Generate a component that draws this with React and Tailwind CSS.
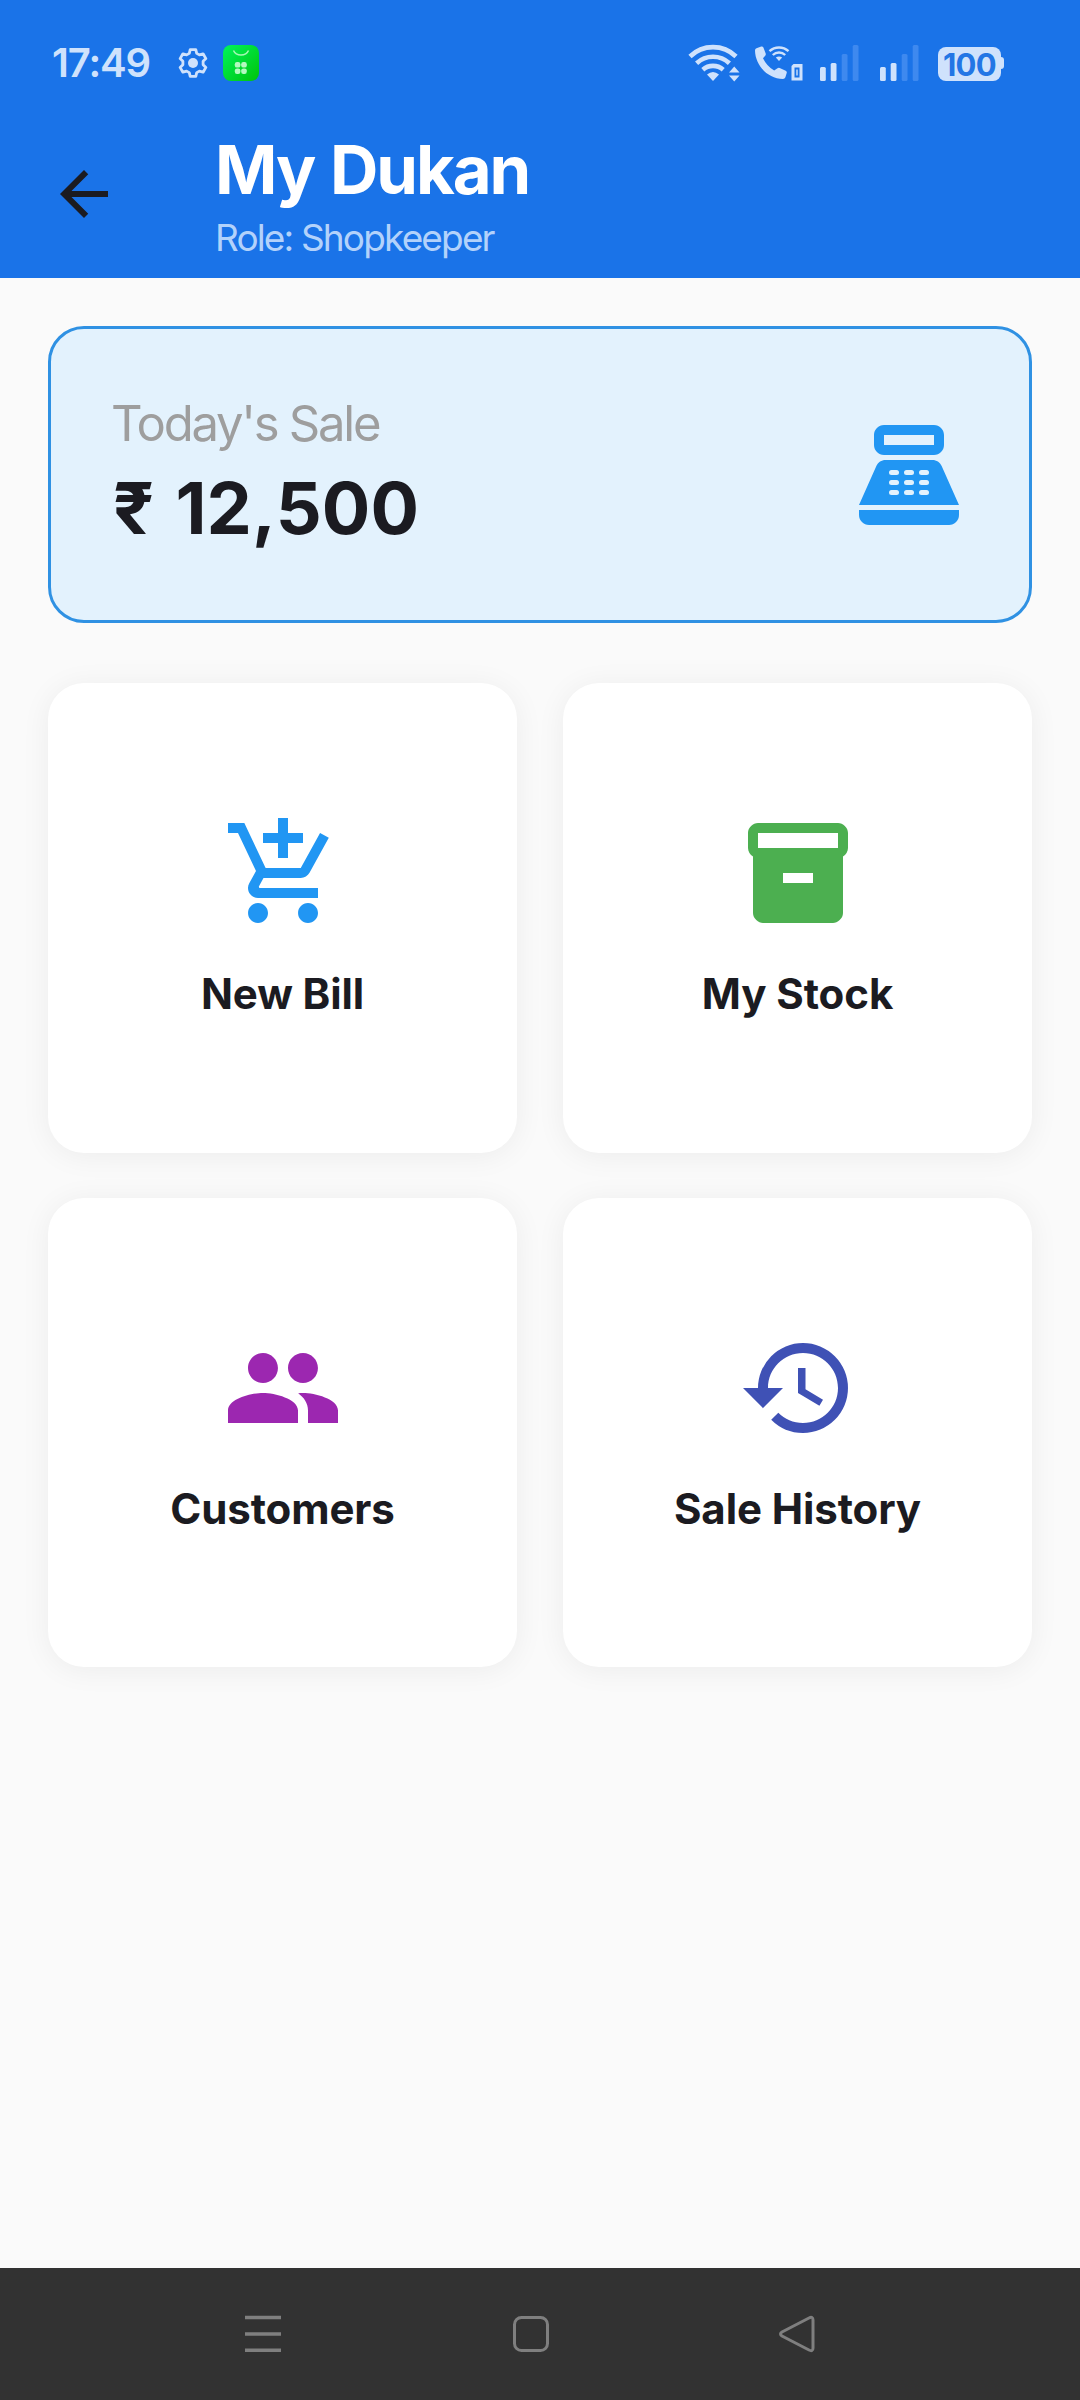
import clsx from 'clsx';
import {
  MdAddShoppingCart,
  MdArrowBack,
  MdHistory,
  MdPeople,
} from 'react-icons/md';

function SettingsIcon() {
  return (
    <svg viewBox="0 0 30 30" className="h-[30px] w-[30px]" fill="none">
      <path
        d="M12.2 1.6h5.6l.9 3.8 2.7 1.5 3.7-1.1 2.8 4.8-2.8 2.7v3.4l2.8 2.7-2.8 4.8-3.7-1.1-2.7 1.5-.9 3.8h-5.6l-.9-3.8-2.7-1.5-3.7 1.1-2.8-4.8 2.8-2.7v-3.4l-2.8-2.7 2.8-4.8 3.7 1.1 2.7-1.5z"
        stroke="currentColor"
        strokeWidth="2.8"
        strokeLinejoin="round"
      />
      <circle cx="15" cy="15" r="5" fill="currentColor" />
    </svg>
  );
}

function ShopBadge() {
  return (
    <svg viewBox="0 0 36 36" className="h-9 w-9">
      <defs>
        <linearGradient id="badge" x1="0" y1="0" x2="1" y2="1">
          <stop offset="0" stopColor="#00f45c" />
          <stop offset="1" stopColor="#00c30a" />
        </linearGradient>
      </defs>
      <rect width="36" height="36" rx="8" fill="url(#badge)" />
      <path d="M10.5 5.5a8 7 0 0 0 15 0" fill="none" stroke="#a5f7b4" strokeWidth="1.5" />
      <g fill="#b4f9bf">
        <rect x="11.8" y="17" width="5.6" height="5.6" rx="2.2" />
        <rect x="18.2" y="17" width="5.6" height="5.6" rx="2.2" />
        <rect x="11.8" y="23.4" width="5.6" height="5.6" rx="2.2" />
        <rect x="18.2" y="23.4" width="5.6" height="5.6" rx="2.2" />
      </g>
    </svg>
  );
}

function WifiIcon() {
  return (
    <svg viewBox="0 0 52 38" className="h-[38px] w-[52px]" fill="none">
      <g stroke="currentColor" strokeWidth="4.6">
        <path d="M2 12.5a33 33 0 0 1 46 0" />
        <path d="M8.6 19.2a24 24 0 0 1 32.8 0" />
        <path d="M14.8 25.7a15.5 15.5 0 0 1 20.4 0" />
      </g>
      <path d="M19 30.5q6-5 12 0l-6 6.5z" fill="currentColor" />
      <path d="M41 28.5h10.5l-5.25-6zM41 31.5h10.5l-5.25 6z" fill="currentColor" />
    </svg>
  );
}

function WifiCallIcon() {
  return (
    <svg viewBox="0 0 49 38" className="h-[38px] w-[49px]" fill="none">
      <path
        d="M2.5 4.3L7.2 2.6q1.6-.4 2.3 1.2l2.2 5.6q.4 1.3-.5 2.3l-2.2 2.6q4 8.3 11.2 12.2l3.3-2.3q1-.7 2.2-.2l6 2.7q1.5.8 1 2.3l-1.3 4.2q-.7 1.7-2.4 1.7C13.5 34.7 1.2 21 1 6.5q0-1.6 1.5-2.2z"
        fill="currentColor"
      />
      <g stroke="currentColor" strokeWidth="2.4">
        <path d="M15.5 7.2a14 14 0 0 1 19 0" />
        <path d="M18.8 11a9 9 0 0 1 12.4 0" />
      </g>
      <path d="M21.8 13.5q3.2-2.2 6.4 0L25 17z" fill="currentColor" />
      <path
        d="M39.5 20H48.5v16.500H37.5V22zM40.5 23.5v10h5v-10zM42.3 25.5h1.4v6h-1.4z"
        fill="currentColor"
        fillRule="evenodd"
      />
    </svg>
  );
}

const bars = [
  { x: 0, y: 22, on: true },
  { x: 10.7, y: 18, on: true },
  { x: 21.7, y: 9, on: false },
  { x: 32.7, y: 0, on: false },
];

function SignalIcon() {
  return (
    <svg viewBox="0 0 39 36" className="h-9 w-[39px]">
      {bars.map((bar) => (
        <rect
          key={bar.x}
          x={bar.x}
          y={bar.y}
          width="5.8"
          height={36 - bar.y}
          rx="1.5"
          fill={bar.on ? '#cfe2fc' : '#3e89ef'}
        />
      ))}
    </svg>
  );
}

function StatusBar() {
  return (
    <div className="flex h-[126px] items-center pl-[52px] pr-[76px] text-[#cfe2fc]">
      <span className="w-[126px] text-[40px] leading-none font-semibold tracking-[-1.1px]">17:49</span>
      <SettingsIcon />
      <div className="ml-[15px]">
        <ShopBadge />
      </div>
      <div className="ml-auto flex items-center">
        <WifiIcon />
        <div className="ml-[14px]">
          <WifiCallIcon />
        </div>
        <div className="ml-[17px]">
          <SignalIcon />
        </div>
        <div className="ml-[21px]">
          <SignalIcon />
        </div>
        <div className="mt-px ml-[19px] flex h-[34px] w-[63px] items-center justify-center rounded-[8px] bg-[#cfe2fc] pt-px text-[31px] leading-none font-bold tracking-[-0.7px] text-[#2376e5]">
          100
        </div>
        <div className="h-3 w-[3px] rounded-r-sm bg-[#cfe2fc]" />
      </div>
    </div>
  );
}

function CashRegisterIcon() {
  return (
    <svg viewBox="0 0 24 24" className="h-[120px] w-[120px]" fill="#2196f3">
      <path
        fillRule="evenodd"
        d="M17 2H7C5.9 2 5 2.9 5 4v2c0 1.1.9 2 2 2h10c1.1 0 2-.9 2-2V4c0-1.1-.9-2-2-2zm0 4H7V4h10v2z"
      />
      <path d="M20 22H4c-1.1 0-2-.9-2-2v-1h20v1c0 1.1-.9 2-2 2z" />
      <path d="M18.53 10.19C18.21 9.47 17.49 9 16.7 9H7.3c-.79 0-1.51.47-1.83 1.19L2 18h20l-3.47-7.81z" />
      <g fill="#e3f2fd">
        {[8, 11, 14].map((x) =>
          [11, 13, 15].map((y) => (
            <rect key={`${x}-${y}`} x={x} y={y} width="2" height="1" rx="0.5" />
          ))
        )}
      </g>
    </svg>
  );
}

function StockIcon({ className }) {
  return (
    <svg viewBox="0 0 24 24" className={className} fill="currentColor">
      <path
        fillRule="evenodd"
        d="M20 2H4c-1 0-2 .9-2 2v3.01c0 .72.43 1.34 1 1.69V20c0 1.1 1.1 2 2 2h14c.9 0 2-.9 2-2V8.7c.57-.35 1-.97 1-1.69V4c0-1.1-1-2-2-2zm-5 12H9v-2h6v2zm5-7H4V4h16v3z"
      />
    </svg>
  );
}

function MenuCard({ icon: Icon, label, color }) {
  return (
    <button
      type="button"
      className="flex h-[469.5px] flex-col items-center justify-center rounded-[36px] bg-white pt-px shadow-[0_3px_30px_rgba(0,0,0,0.06)]"
    >
      <Icon className={clsx('h-[120px] w-[120px]', color)} />
      <span className="mt-[31px] text-[42px] leading-[59px] font-bold tracking-[-0.1px] text-[#1b1b21]">
        {label}
      </span>
    </button>
  );
}

const menu = [
  { icon: MdAddShoppingCart, label: 'New Bill', color: 'text-[#2196f3]' },
  { icon: StockIcon, label: 'My Stock', color: 'text-[#4caf50]' },
  { icon: MdPeople, label: 'Customers', color: 'text-[#9c27b0]' },
  { icon: MdHistory, label: 'Sale History', color: 'text-[#3f51b5]' },
];

function NavBar() {
  return (
    <div className="flex h-[132px] items-center bg-[#323232] pl-[244px] text-[#7f7f7f]">
      <svg viewBox="0 0 38 48" className="h-12 w-[38px]" stroke="currentColor" strokeWidth="3.5">
        <path d="M1 7.5h36M1 24h36M1 40.3h36" />
      </svg>
      <svg viewBox="0 0 38 48" className="ml-[230px] h-12 w-[38px]" fill="none" stroke="currentColor" strokeWidth="3">
        <rect x="2.5" y="7.5" width="33" height="33" rx="7" />
      </svg>
      <svg viewBox="0 0 38 48" className="ml-[228px] h-12 w-[38px]" fill="none" stroke="currentColor" strokeWidth="3">
        <path d="M31 8q4-2 4 2v28q0 4-4 2L4 26q-3-2 0-4z" />
      </svg>
    </div>
  );
}

export default function App() {
  return (
    <div className="flex h-[2400px] w-[1080px] flex-col bg-[#fafafa] font-['Inter',sans-serif] text-[#1b1b21]">
      <header className="h-[278px] bg-[#1a73e8]">
        <StatusBar />
        <div className="flex h-[136px] items-center pl-12">
          <MdArrowBack className="h-[72px] w-[72px] text-[#1b1b21]" />
          <div className="ml-[95px] pt-1">
            <h1 className="text-[67px] leading-[80px] font-bold tracking-[-2.1px] text-white [word-spacing:2px]">
              My Dukan
            </h1>
            <p className="mt-[3px] text-[37px] leading-[50px] font-normal tracking-[-1.85px] text-[#b3d2fb]">
              Role: Shopkeeper
            </p>
          </div>
        </div>
      </header>

      <main className="flex-1 px-12 pt-12">
        {/* Today's total */}
        <section className="flex h-[297px] items-center justify-between rounded-[36px] border-[3px] border-[#2f91e3] bg-[#e3f2fd] pr-[60px] pl-[60px]">
          <div className="pb-[2px]">
            <p className="text-[49px] leading-[68px] font-normal tracking-[-2.25px] text-[#9e9e9e]">Today's Sale</p>
            <p className="pl-[2px] text-[72px] leading-[100px] font-bold tracking-[0.1px] [word-spacing:4px]">
              ₹ 12,500
            </p>
          </div>
          <CashRegisterIcon />
        </section>

        <div className="mt-[60px] grid grid-cols-2 gap-x-[46px] gap-y-[45px]">
          {menu.map((item) => (
            <MenuCard key={item.label} {...item} />
          ))}
        </div>
      </main>

      <NavBar />
    </div>
  );
}
